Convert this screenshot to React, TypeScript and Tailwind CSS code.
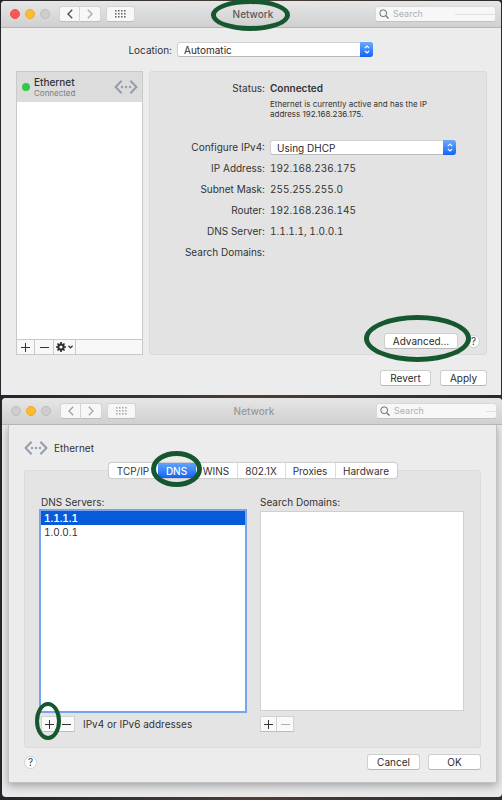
import type { ReactNode } from "react";

const push =
  "flex h-4 items-center justify-center rounded-[3px] border border-[#cfcfcf] border-b-[#b8b8b8] bg-white text-[10px] leading-3 text-[#2b2b2b]";
const toolButton =
  "flex h-4 items-center justify-center border border-[#d2d2d2] border-b-[#bdbdbd] bg-[#fafafa]";

function Ring({ place }: { place: string }) {
  return (
    <span
      aria-hidden="true"
      className={`pointer-events-none absolute z-20 rounded-[50%] border-[#15572f] ${place}`}
    />
  );
}

function Plus() {
  return (
    <svg width="9" height="9" viewBox="0 0 9 9" stroke="currentColor" fill="none">
      <path d="M0 4.5H9M4.5 0V9" />
    </svg>
  );
}

function Minus() {
  return (
    <svg width="9" height="9" viewBox="0 0 9 9" stroke="currentColor" fill="none">
      <path d="M0 4.5H9" />
    </svg>
  );
}

function EthernetIcon() {
  return (
    <svg width="24" height="14" viewBox="0 0 24 14" fill="none" stroke="#929dac" strokeWidth="2">
      <path d="M7.6 0.8L1.6 7L7.6 13.2M16.4 0.8L22.4 7L16.4 13.2" />
      <g fill="#929dac" stroke="none">
        <circle cx="8" cy="7" r="1.2" />
        <circle cx="12" cy="7" r="1.2" />
        <circle cx="16" cy="7" r="1.2" />
      </g>
    </svg>
  );
}

function Gear() {
  return (
    <svg width="10" height="10" viewBox="0 0 10 10" fill="none" stroke="#2e2e2e">
      <circle cx="5" cy="5" r="2.6" strokeWidth="2" />
      <path
        d="M5 0V2M5 8V10M0 5H2M8 5H10M1.5 1.5L2.8 2.8M7.2 7.2L8.5 8.5M8.5 1.5L7.2 2.8M2.8 7.2L1.5 8.5"
        strokeWidth="1.7"
      />
    </svg>
  );
}

function Chevron({ back = false, color }: { back?: boolean; color: string }) {
  return (
    <svg width="6" height="10" viewBox="0 0 6 10" fill="none" stroke={color} strokeWidth="1.3">
      <path d={back ? "M5.2 0.8L1 5L5.2 9.2" : "M0.8 0.8L5 5L0.8 9.2"} />
    </svg>
  );
}

function TitleBar({ active, children }: { active: boolean; children?: ReactNode }) {
  const nav =
    "flex h-4 w-[21px] items-center justify-center border border-[#d4d4d4] border-b-[#bebebe] bg-[#f7f7f7]";
  return (
    <header className="grid h-[27px] grid-cols-[1fr_auto_1fr] items-center rounded-t-[4px] border-b border-[#b5b5b5] bg-linear-to-b from-[#e6e6e6] to-[#d0d0d0] pr-[5px] pl-[9px]">
      <div className="flex items-center">
        <div className="flex gap-[5px]">
          <button
            aria-label="Close"
            className={`size-[10px] rounded-full border ${active ? "border-[#ec4f4b] bg-[#fc5753]" : "border-[#bcbcbc] bg-[#cecece]"}`}
          />
          <button
            aria-label="Minimize"
            className="size-[10px] rounded-full border border-[#efaa24] bg-[#fdbc2f]"
          />
          <button
            aria-label="Zoom"
            className="size-[10px] rounded-full border border-[#bcbcbc] bg-[#cecece]"
          />
        </div>
        <div className="ml-[9px] flex">
          <button aria-label="Back" className={`${nav} rounded-l-[3px]`}>
            <Chevron back color={active ? "#4a4a4a" : "#a0a0a0"} />
          </button>
          <button aria-label="Forward" className={`${nav} rounded-r-[3px] border-l-0`}>
            <Chevron color="#a8a8a8" />
          </button>
        </div>
        <button
          aria-label="Show All"
          className="ml-[5px] flex h-4 w-[29px] items-center justify-center rounded-[3px] border border-[#d4d4d4] border-b-[#bebebe] bg-[#f7f7f7]"
        >
          <svg width="11" height="8" viewBox="0 0 11 8" fill={active ? "#555555" : "#a0a0a0"}>
            {[0, 3, 6].map((y) =>
              [0, 3, 6, 9].map((x) => <rect key={`${x}-${y}`} x={x} y={y} width="1.6" height="1.6" rx="0.4" />),
            )}
          </svg>
        </button>
      </div>
      <h1 className={`relative font-medium ${active ? "text-[#5a5a5a]" : "text-[#999999]"}`}>
        Network
        {children}
      </h1>
      <label className="flex h-4 w-[121px] items-center justify-self-end rounded-[3px] border border-[#d9d9d9] border-b-[#c2c2c2] bg-[#f7f7f7] pl-[3px]">
        <svg width="10" height="10" viewBox="0 0 10 10" fill="none" stroke="#6c6c6c">
          <circle cx="4.2" cy="4.2" r="3.4" />
          <path d="M6.7 6.7L9.5 9.5" strokeWidth="1.2" />
        </svg>
        <input
          type="text"
          aria-label="Search"
          placeholder="Search"
          className="ml-1 min-w-0 flex-1 bg-transparent text-[9px] leading-3 outline-none placeholder:text-[#b0b0b0]"
        />
        <span className={`h-px bg-[#e0e0e0] ${active ? "w-10" : "w-[10px]"}`} />
      </label>
    </header>
  );
}

function PopUp({ id, value, width }: { id: string; value: string; width: string }) {
  return (
    <div className={`relative ${width}`}>
      <select
        id={id}
        className="block h-[15px] w-full appearance-none rounded-[3px] border border-[#d0d0d0] border-b-[#bababa] bg-white pl-[6px] text-[10px] leading-3 text-[#2b2b2b]"
      >
        <option>{value}</option>
      </select>
      <span className="pointer-events-none absolute inset-y-0 right-0 flex w-[13px] items-center justify-center rounded-r-[3px] bg-linear-to-b from-[#6aaaf9] to-[#0f63f5]">
        <svg width="6" height="9" viewBox="0 0 6 9" fill="none" stroke="white" strokeWidth="1.1">
          <path d="M0.8 3.2L3 1L5.2 3.2M0.8 5.8L3 8L5.2 5.8" />
        </svg>
      </span>
    </div>
  );
}

function Help() {
  return (
    <button
      aria-label="Help"
      className="flex size-[13px] items-center justify-center rounded-full border border-[#d0d0d0] bg-white text-[10px] leading-[10px] text-[#3c3c3c]"
    >
      ?
    </button>
  );
}

const details = [
  ["IP Address:", "192.168.236.175"],
  ["Subnet Mask:", "255.255.255.0"],
  ["Router:", "192.168.236.145"],
  ["DNS Server:", "1.1.1.1, 1.0.0.1"],
  ["Search Domains:", ""],
];

function NetworkWindow() {
  return (
    <section className="mr-px ml-px rounded-t-[4px] bg-[#ececec]">
      <TitleBar active>
        <Ring place="-top-[8px] -right-[17px] -bottom-[10px] -left-[22px] border-[5px]" />
      </TitleBar>
      <div className="pt-[14px] pr-[14px] pb-[9px] pl-[15px]">
        <div className="flex items-center">
          <label htmlFor="location" className="w-[156px] text-right">
            Location:
          </label>
          <div className="ml-[5px]">
            <PopUp id="location" value="Automatic" width="w-[196px]" />
          </div>
        </div>

        <div className="mt-[14px] flex gap-[6px]">
          <div className="flex w-[127px] flex-col border border-[#c9c9c9] bg-white">
            <button className="flex h-[30px] items-center bg-[#dcdcdc] pr-1 pl-[5px] text-left">
              <span className="size-2 rounded-full bg-[#31c948]" />
              <span className="ml-1 flex-1">
                <span className="block leading-[11px] font-medium">Ethernet</span>
                <span className="block text-[8px] leading-[10px] text-[#7d7d7d]">Connected</span>
              </span>
              <EthernetIcon />
            </button>
            <div className="flex-1" />
            <div className="flex h-[15px] border-t border-[#c9c9c9] bg-[#f8f8f8]">
              <button aria-label="Add service" className="flex w-[18px] items-center justify-center border-r border-[#c9c9c9]">
                <Plus />
              </button>
              <button aria-label="Remove service" className="flex w-[19px] items-center justify-center border-r border-[#c9c9c9]">
                <Minus />
              </button>
              <button aria-label="Service actions" className="flex w-[22px] items-center justify-center gap-[2px] border-r border-[#c9c9c9]">
                <Gear />
                <svg width="5" height="4" viewBox="0 0 5 4" fill="none" stroke="#333333" strokeWidth="1.2">
                  <path d="M0.4 0.8L2.5 2.8L4.6 0.8" />
                </svg>
              </button>
            </div>
          </div>

          <div className="flex min-h-[284px] flex-1 flex-col rounded-[3px] border border-[#dadada] bg-[#e3e3e3] pt-[6px] pr-[6px] pb-[5px]">
            <dl className="grid grid-cols-[115px_1fr] gap-x-[5px] leading-[21px]">
              <dt className="text-right">Status:</dt>
              <dd className="font-semibold">Connected</dd>
              <dd className="col-start-2 mb-[18px] w-[170px] text-[8px] leading-[10px]">
                Ethernet is currently active and has the IP address 192.168.236.175.
              </dd>
              <dt className="text-right">
                <label htmlFor="ipv4">Configure IPv4:</label>
              </dt>
              <dd className="flex items-center">
                <PopUp id="ipv4" value="Using DHCP" width="w-[186px]" />
              </dd>
              {details.map(([name, value]) => (
                <div key={name} className="contents">
                  <dt className="text-right">{name}</dt>
                  <dd className="tabular-nums">{value}</dd>
                </div>
              ))}
            </dl>
            <div className="mt-auto flex items-center justify-end gap-[9px]">
              <div className="relative">
                <button className={`${push} w-[74px]`}>Advanced...</button>
                <Ring place="-top-[18px] -right-[13px] -bottom-[13px] -left-[20px] border-[5px]" />
              </div>
              <Help />
            </div>
          </div>
        </div>

        <div className="mt-[15px] flex justify-end gap-[9px]">
          <button className={`${push} w-[51px]`}>Revert</button>
          <button className={`${push} w-[47px]`}>Apply</button>
        </div>
      </div>
    </section>
  );
}

const tabs = [
  { name: "TCP/IP", width: "w-[49px]" },
  { name: "DNS", width: "w-[38px]" },
  { name: "WINS", width: "w-[42px]" },
  { name: "802.1X", width: "w-[48px]" },
  { name: "Proxies", width: "w-[50px]" },
  { name: "Hardware", width: "w-[61px]" },
];

function DnsWindow() {
  return (
    <section className="ml-[2px] rounded-[4px] bg-[#e9e9e9] pb-[14px]">
      <TitleBar active={false} />
      <div className="mr-[5px] ml-[6px] border-x border-b border-[#c2c2c2] bg-[#ececec] px-[15px] pb-3 shadow-[0_3px_8px_rgba(0,0,0,0.3)] [clip-path:inset(0_-6px_-14px_-6px)]">
        <div className="flex h-[38px] items-center gap-[6px] pt-2">
          <EthernetIcon />
          <h2>Ethernet</h2>
        </div>
        <div className="relative z-10 -mb-2 flex justify-center">
          <div role="tablist" className="flex h-[15px] rounded-[3px] bg-white shadow-[0_0_1px_1px_#cccccc]">
            {tabs.map(({ name, width }) => (
              <div key={name} className={`relative ${width}`}>
                <button
                  role="tab"
                  aria-selected={name === "DNS"}
                  className={`h-full w-full leading-3 ${name === "DNS" ? "bg-linear-to-b from-[#62a3fa] to-[#1061f7] font-medium text-white" : ""} ${name === "WINS" || name === "802.1X" || name === "Proxies" ? "border-r border-[#dddddd]" : ""}`}
                >
                  {name}
                </button>
                {name === "DNS" && <Ring place="-top-[12px] -right-[6px] -bottom-[9px] -left-[7px] border-[5px]" />}
              </div>
            ))}
          </div>
        </div>
        <div className="grid grid-cols-2 gap-x-[15px] rounded-[3px] border border-[#dcdcdc] bg-[#e4e4e4] px-4 pt-6 pb-[15px]">
          <div>
            <h3 className="mb-[2px]">DNS Servers:</h3>
            <ul
              role="listbox"
              aria-label="DNS Servers"
              className="h-[200px] bg-white tabular-nums shadow-[0_0_0_2px_#78a4ee]"
            >
              <li role="option" aria-selected="true" className="bg-[#075ad8] pl-[3px] font-semibold text-white">
                1.1.1.1
              </li>
              <li role="option" aria-selected="false" className="pl-[3px]">
                1.0.0.1
              </li>
            </ul>
            <div className="mt-[5px] flex items-center">
              <div className="relative">
                <button aria-label="Add DNS server" className={`${toolButton} w-[17px]`}>
                  <Plus />
                </button>
                <Ring place="-top-[14px] -right-[3px] -bottom-[8px] -left-[6px] border-[4px]" />
              </div>
              <button aria-label="Remove DNS server" className={`${toolButton} w-[17px] border-l-0`}>
                <Minus />
              </button>
              <span className="ml-2">IPv4 or IPv6 addresses</span>
            </div>
          </div>
          <div>
            <h3 className="mb-[2px]">Search Domains:</h3>
            <ul role="listbox" aria-label="Search Domains" className="h-[200px] border border-[#d0d0d0] bg-white" />
            <div className="mt-[5px] flex">
              <button aria-label="Add search domain" className={`${toolButton} w-[17px]`}>
                <Plus />
              </button>
              <button aria-label="Remove search domain" disabled className={`${toolButton} w-[17px] border-l-0 bg-[#f0f0f0] text-[#b0b0b0]`}>
                <Minus />
              </button>
            </div>
          </div>
        </div>
        <div className="mt-[6px] flex items-center">
          <Help />
          <div className="ml-auto flex gap-2">
            <button className={`${push} w-[53px]`}>Cancel</button>
            <button className={`${push} w-[53px]`}>OK</button>
          </div>
        </div>
      </div>
    </section>
  );
}

export default function App() {
  return (
    <main className="flex min-h-screen flex-col gap-[3px] overflow-hidden bg-linear-to-r from-[#26242b] via-[#4a3f37] to-[#2f2a28] pt-px font-[Inter,'Liberation_Sans',sans-serif] text-[10px] leading-[14px] text-[#333333]">
      <NetworkWindow />
      <DnsWindow />
    </main>
  );
}
